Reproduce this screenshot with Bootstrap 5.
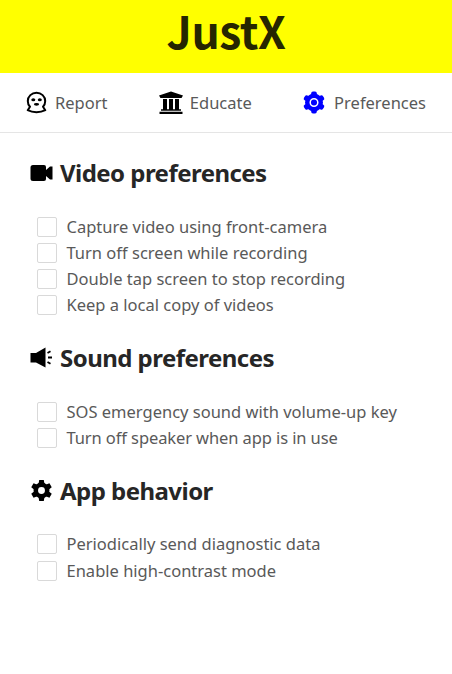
<!DOCTYPE html>
<html lang="en">
<head>
<meta charset="utf-8">
<meta name="viewport" content="width=device-width, initial-scale=1">
<title>JustX</title>
<link href="https://cdn.jsdelivr.net/npm/bootstrap@5.3.0/dist/css/bootstrap.min.css" rel="stylesheet">
<style>
body { font-family: "Noto Sans", sans-serif; font-size: 16.5px; color: #595959; background: #fff; }
.brand-bar { background: #ffff00; height: 73px; }
.brand-bar h1 { font-family: "Noto Sans CJK SC", "Noto Sans", sans-serif; font-size: 44.5px; line-height: 59px; font-weight: 700; color: #262600; letter-spacing: -.5px; }
.tabs { height: 60px; border-bottom: 1px solid #e5e5e5; padding: 0 26px 0 25px; }
.tabs a { color: #595959; line-height: 24px; gap: 7px; }
.tabs a:nth-child(3) { gap: 9px; }
.section-title { font-size: 24px; line-height: 30px; font-weight: 700; color: #262626; letter-spacing: -.54px; gap: 6px; }
.prefs { padding: 25px 0 0 30px; }
.options { padding: 26px 0 0 7px; }
.options .form-check { height: 26.1px; min-height: 0; gap: 9.5px; }
.options .form-check-input { width: 20px; height: 20px; border: 1px solid #d9d9d9; border-radius: 2px; }
.options label { line-height: 24px; white-space: nowrap; }
.group-video { height: 185px; }
.group-sound { height: 133px; }
.group-app .options { padding-top: 25px; }
.group-app .form-check { height: 26.5px; }
.snug { letter-spacing: -.1px; }
</style>
<script src="https://cdn.jsdelivr.net/npm/bootstrap@5.3.0/dist/js/bootstrap.bundle.min.js"></script>
</head>
<body>
<header class="brand-bar text-center"><h1 class="m-0">JustX</h1></header>
<nav class="tabs d-flex justify-content-between align-items-center">
  <a href="#" class="d-flex align-items-center text-decoration-none">
    <svg width="23" height="23" viewBox="0 0 23 23"><path d="M5 15.800C3.300 14 2.800 12.500 2.800 10a8.700 8.300 0 0 1 17.400 0c0 2.500-.5 4-2.200 5.800l2.300 3.400c-5 2.600-12.600 2.600-17.600 0z" fill="none" stroke="#000" stroke-width="2" stroke-linejoin="round"/><ellipse cx="8.300" cy="8.800" rx="2" ry="1.500"/><ellipse cx="14.800" cy="8.800" rx="2" ry="1.500"/><ellipse cx="11.500" cy="13.300" rx="2.600" ry="1.400"/></svg>
    <span>Report</span></a>
  <a href="#" class="d-flex align-items-center text-decoration-none">
    <svg width="24" height="24" viewBox="0 0 24 24"><path d="M0 4.500 12 .5l12 4L22.500 7h-21zM4 8h4v11H4zM10 8h4v11h-4zM16 8h4v11h-4zM2 18.200h20v1.600H2zM.5 20.800h23v2.200H.5z"/></svg>
    <span>Educate</span></a>
  <a href="#" class="d-flex align-items-center text-decoration-none">
    <svg width="22" height="23" viewBox="-11 -11.500 22 23"><g fill="#00f"><circle r="9"/><g id="tooth"><rect x="-2.800" y="-11" width="5.600" height="22" rx="1.800"/></g><use href="#tooth" transform="rotate(60)"/><use href="#tooth" transform="rotate(120)"/></g><circle r="3.800" fill="none" stroke="#fff" stroke-width="1.500"/></svg>
    <span>Preferences</span></a>
</nav>
<main class="prefs">
  <section class="group-video">
    <h2 class="section-title d-flex align-items-center m-0"><svg width="24" height="24" viewBox="0 0 24 24"><path d="M3 4h11q2 0 2 2v3l4-3.500h2.500v13H20L16 15v3q0 2-2 2H3q-2.500 0-2.500-2.500v-11Q.5 4 3 4z"/></svg><span>Video preferences</span></h2>
    <div class="options">
      <div class="form-check d-flex align-items-center p-0 m-0"><input class="form-check-input m-0" type="checkbox" id="o1"><label for="o1">Capture video using front-camera</label></div>
      <div class="form-check d-flex align-items-center p-0 m-0"><input class="form-check-input m-0" type="checkbox" id="o2"><label for="o2">Turn off screen while recording</label></div>
      <div class="form-check d-flex align-items-center p-0 m-0"><input class="form-check-input m-0" type="checkbox" id="o3"><label for="o3">Double tap screen to stop recording</label></div>
      <div class="form-check d-flex align-items-center p-0 m-0"><input class="form-check-input m-0" type="checkbox" id="o4"><label for="o4">Keep a local copy of videos</label></div>
    </div>
  </section>
  <section class="group-sound">
    <h2 class="section-title d-flex align-items-center m-0"><svg width="24" height="24" viewBox="0 0 24 24"><path d="M.5 7H6l9.500-5.500v20L6 16.500H.5z"/><path d="m17.500 7 3-1.800M18 11.500h4M17.500 16l3 1.800" fill="none" stroke="#000" stroke-width="1.800"/></svg><span>Sound preferences</span></h2>
    <div class="options">
      <div class="form-check d-flex align-items-center p-0 m-0"><input class="form-check-input m-0" type="checkbox" id="o5"><label for="o5">SOS emergency sound with volume-up key</label></div>
      <div class="form-check d-flex align-items-center p-0 m-0"><input class="form-check-input m-0" type="checkbox" id="o6"><label for="o6" class="snug">Turn off speaker when app is in use</label></div>
    </div>
  </section>
  <section class="group-app">
    <h2 class="section-title d-flex align-items-center m-0"><svg width="24" height="24" viewBox="-11.500 -11.500 24 24"><circle r="5.700" fill="none" stroke="#000" stroke-width="4.500"/><g id="cog"><path d="M-2.300-10.500h4.600l.7 4h-6zM-2.300 10.500h4.600l.7-4h-6z"/></g><use href="#cog" transform="rotate(60)"/><use href="#cog" transform="rotate(120)"/></svg><span>App behavior</span></h2>
    <div class="options">
      <div class="form-check d-flex align-items-center p-0 m-0"><input class="form-check-input m-0" type="checkbox" id="o7"><label for="o7">Periodically send diagnostic data</label></div>
      <div class="form-check d-flex align-items-center p-0 m-0"><input class="form-check-input m-0" type="checkbox" id="o8"><label for="o8">Enable high-contrast mode</label></div>
    </div>
  </section>
</main>
</body>
</html>
